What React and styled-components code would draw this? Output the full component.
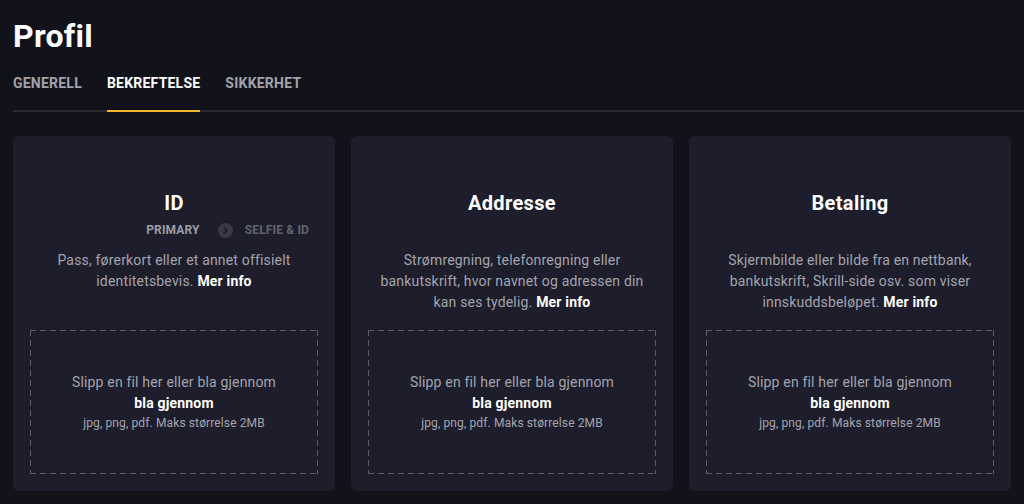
import React from "react";
import styled, { createGlobalStyle } from "styled-components";

const GlobalStyle = createGlobalStyle`
  html, body {
    margin: 0;
    padding: 0;
    background: #12121b;
    font-family: Roboto, "Liberation Sans", Arial, sans-serif;
    -webkit-font-smoothing: antialiased;
  }
  * { box-sizing: border-box; }
`;

const Page = styled.div`
  padding: 17px 0 13px 13px;
  min-height: 504px;
  background: #12121b;
`;

const Title = styled.h1`
  margin: 0;
  font-size: 32px;
  line-height: 38px;
  font-weight: 700;
  color: #ffffff;
  letter-spacing: 0.3px;
`;

const TabBar = styled.nav`
  display: flex;
  gap: 25px;
  margin-top: 20px;
  border-bottom: 2px solid #2a2a32;
`;

const Tab = styled.button`
  appearance: none;
  background: none;
  border: none;
  padding: 0 0 18px;
  margin-bottom: -2px;
  border-bottom: 2px solid ${(p) => (p.$active ? "#f2b42c" : "transparent")};
  font-family: inherit;
  font-size: 14px;
  line-height: 17px;
  font-weight: 700;
  letter-spacing: 0.22px;
  text-transform: uppercase;
  color: ${(p) => (p.$active ? "#ffffff" : "#a2a2aa")};
  cursor: pointer;
`;

const Cards = styled.div`
  display: grid;
  grid-template-columns: repeat(3, 322px);
  gap: 16px;
  margin-top: 24px;
`;

const Card = styled.section`
  display: flex;
  flex-direction: column;
  align-items: center;
  background: #1d1d2b;
  border-radius: 6px;
  padding: 55px 17px 17px;
  min-height: 355px;
`;

const CardHead = styled.div`
  display: flex;
  flex-direction: column;
  align-items: center;
  align-self: stretch;
  height: 47px;
`;

const CardTitle = styled.h2`
  margin: 0;
  font-size: 20px;
  line-height: 24px;
  font-weight: 700;
  letter-spacing: 0.35px;
  color: #ffffff;
`;

const Steps = styled.div`
  display: flex;
  align-items: center;
  align-self: flex-end;
  gap: 12px;
  margin-top: 7px;
  padding-right: 9px;
  height: 16px;
`;

const Step = styled.span`
  font-size: 12px;
  line-height: 16px;
  font-weight: 700;
  letter-spacing: 0.15px;
  text-transform: uppercase;
  color: ${(p) => (p.$current ? "#9c9ca4" : "#63636d")};
`;

const StepArrow = styled.span`
  display: flex;
  align-items: center;
  justify-content: center;
  width: 15px;
  height: 15px;
  margin-left: 6px;
  border-radius: 50%;
  background: #3a3a46;
`;

const Description = styled.p`
  margin: 12px 0 0;
  padding: 0 4px;
  text-align: center;
  font-size: 14px;
  line-height: 21px;
  letter-spacing: 0.18px;
  color: #a4a4ae;
`;

const MoreLink = styled.a`
  font-weight: 700;
  color: #ffffff;
  text-decoration: none;
  cursor: pointer;
`;

/* dashed outline drawn with gradients so the dashes are 6px long */
const DropZone = styled.div`
  align-self: stretch;
  margin-top: auto;
  height: 144px;
  display: flex;
  flex-direction: column;
  align-items: center;
  justify-content: center;
  text-align: center;
  background-image:
    linear-gradient(to right, #5d5d68 6px, transparent 6px),
    linear-gradient(to right, #5d5d68 6px, transparent 6px),
    linear-gradient(to bottom, #5d5d68 6px, transparent 6px),
    linear-gradient(to bottom, #5d5d68 6px, transparent 6px);
  background-size: 10px 1px, 10px 1px, 1px 10px, 1px 10px;
  background-position: 0 0, 0 100%, 0 0, 100% 0;
  background-repeat: repeat-x, repeat-x, repeat-y, repeat-y;
`;

const DropText = styled.span`
  font-size: 14px;
  line-height: 21px;
  letter-spacing: 0.18px;
  color: ${(p) => (p.$strong ? "#ffffff" : "#a4a4ae")};
  font-weight: ${(p) => (p.$strong ? 700 : 400)};
`;

const DropHint = styled.span`
  font-size: 12px;
  line-height: 19px;
  letter-spacing: 0.12px;
  color: #a4a4ae;
`;

const Chevron = () => (
  <svg width="9" height="9" viewBox="0 0 10 10" aria-hidden="true">
    <path d="M3.6 2 L6.6 5 L3.6 8" fill="none" stroke="#1f1f2c" strokeWidth="2" strokeLinecap="round" strokeLinejoin="round" />
  </svg>
);

const cards = [
  {
    title: "ID",
    steps: true,
    text: "Pass, førerkort eller et annet offisielt identitetsbevis.",
  },
  {
    title: "Addresse",
    text: "Strømregning, telefonregning eller bankutskrift, hvor navnet og adressen din kan ses tydelig.",
  },
  {
    title: "Betaling",
    text: "Skjermbilde eller bilde fra en nettbank, bankutskrift, Skrill-side osv. som viser innskuddsbeløpet.",
  },
];

const tabs = ["Generell", "Bekreftelse", "Sikkerhet"];

export default function App() {
  return (
    <>
      <GlobalStyle />
      <Page>
        <Title>Profil</Title>
        <TabBar>
          {tabs.map((t) => (
            <Tab key={t} $active={t === "Bekreftelse"}>
              {t}
            </Tab>
          ))}
        </TabBar>
        <Cards>
          {cards.map((c) => (
            <Card key={c.title}>
              <CardHead>
                <CardTitle>{c.title}</CardTitle>
                {c.steps && (
                  <Steps>
                    <Step $current>Primary</Step>
                    <StepArrow>
                      <Chevron />
                    </StepArrow>
                    <Step>Selfie &amp; ID</Step>
                  </Steps>
                )}
              </CardHead>
              <Description>
                {c.text} <MoreLink>Mer info</MoreLink>
              </Description>
              <DropZone>
                <DropText>Slipp en fil her eller bla gjennom</DropText>
                <DropText $strong>bla gjennom</DropText>
                <DropHint>jpg, png, pdf. Maks størrelse 2MB</DropHint>
              </DropZone>
            </Card>
          ))}
        </Cards>
      </Page>
    </>
  );
}
